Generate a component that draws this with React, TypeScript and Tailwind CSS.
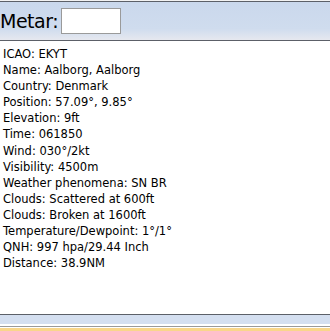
const lines = [
  'ICAO: EKYT',
  'Name: Aalborg, Aalborg',
  'Country: Denmark',
  'Position: 57.09°, 9.85°',
  'Elevation: 9ft',
  'Time: 061850',
  'Wind: 030°/2kt',
  'Visibility: 4500m',
  'Weather phenomena: SN BR',
  'Clouds: Scattered at 600ft',
  'Clouds: Broken at 1600ft',
  'Temperature/Dewpoint: 1°/1°',
  'QNH: 997 hpa/29.44 Inch',
  'Distance: 38.9NM',
];

export default function App() {
  return (
    <div className="w-[330px] h-[331px] bg-white flex flex-col overflow-hidden font-['DejaVu_Sans',sans-serif] text-black">
      <div className="h-px bg-[#f2f2f2]" />
      <div className="h-[40px] border-y border-[#5c6068] bg-gradient-to-b from-[#cad8ec] via-[#cfdcee] via-70% to-[#e6e8ef] flex items-center">
        <span className="text-[19px] leading-none tracking-[-0.5px]">Metar:</span>
        <input
          type="text"
          className="ml-[3px] w-[60px] h-[26px] bg-white border border-[#9a9a9a] outline-none"
        />
      </div>
      <div className="flex-1 pt-[5px] pl-[3px] text-[11.5px] leading-[16.1px]">
        {lines.map(line => (
          <div key={line}>{line}</div>
        ))}
      </div>
      <div className="h-[12px] border-t border-[#5c6068] bg-[#d4dff0] border-b-2 border-b-white" />
      <div className="h-px bg-[#9a9a9a]" />
      <div className="h-px bg-white" />
      <div className="h-[3px] bg-[#f9d68a]" />
    </div>
  );
}
